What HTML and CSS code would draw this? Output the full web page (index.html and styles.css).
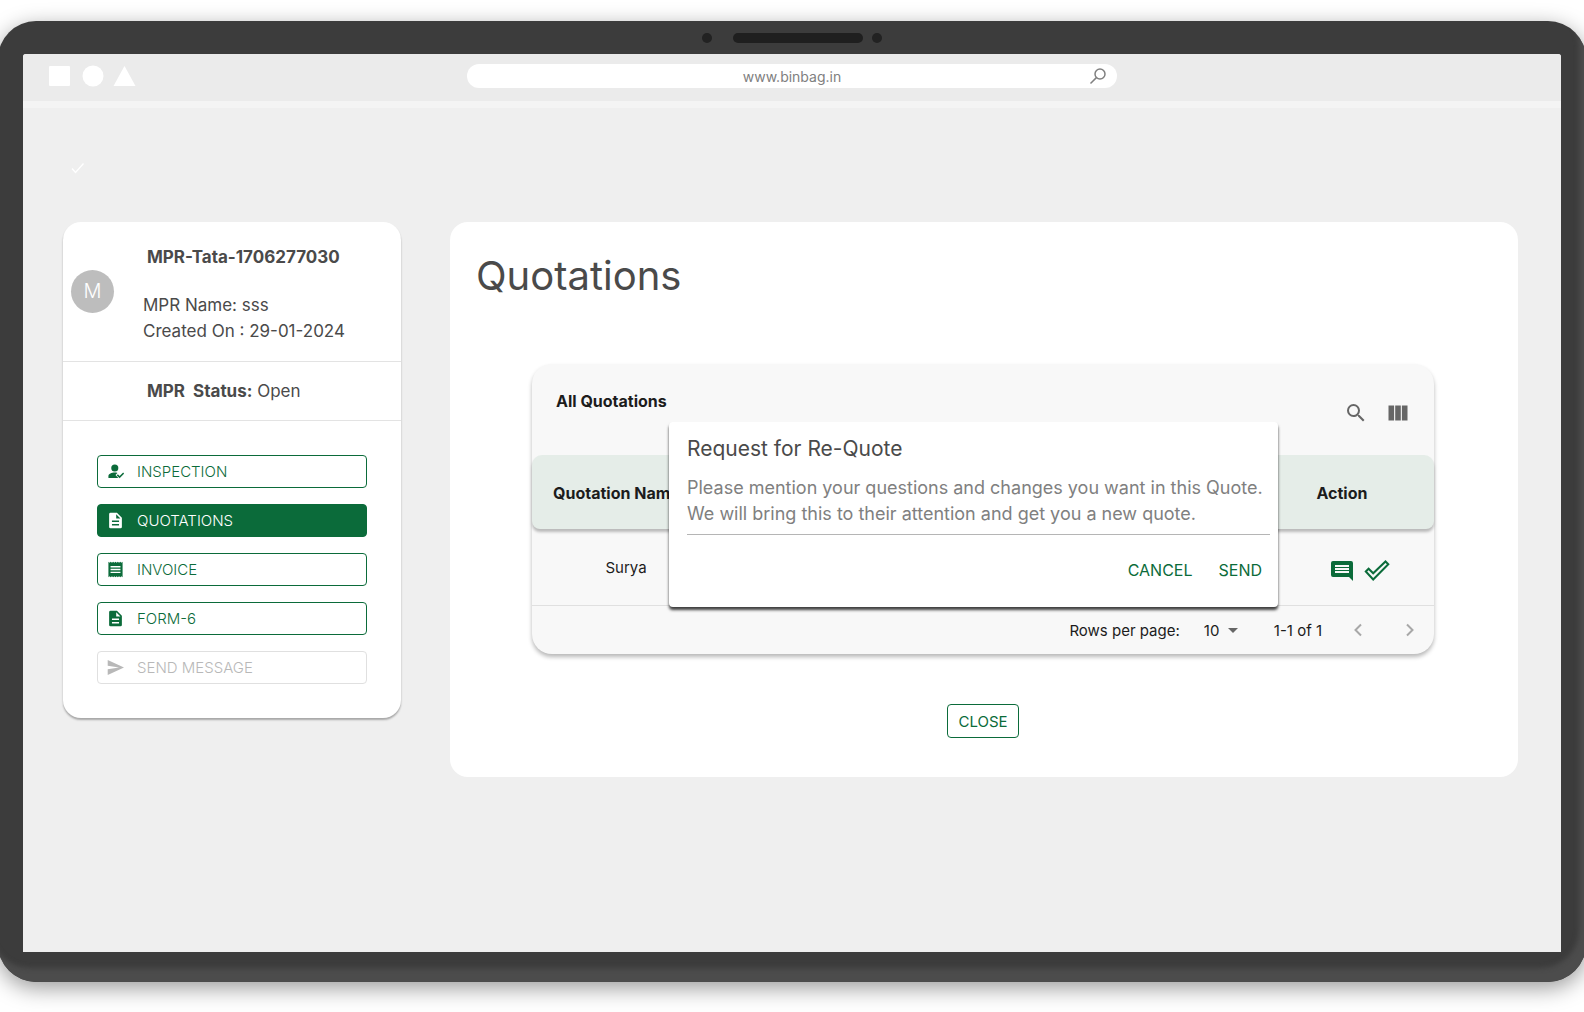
FILE: index.html
```html
<!DOCTYPE html>
<html lang="en">
<head>
    <meta charset="UTF-8">
    <meta name="viewport" content="width=device-width, initial-scale=1.0">
    <title>Quotations</title>
    <link rel="stylesheet" href="styles.css">
</head>
<body>
    <div class="device">
        <div class="camera-bar">
            <span class="camera-dot"></span>
            <span class="speaker"></span>
            <span class="camera-dot"></span>
        </div>

        <div class="screen">
            <header class="browser-bar">
                <svg class="window-shapes" width="88" height="22" viewBox="0 0 88 22" fill="#fff">
                    <rect x="1" y="1" width="21" height="20" rx="1"/>
                    <circle cx="45" cy="11" r="10.5"/>
                    <path d="M76.500 1L87.500 21H65.500z"/>
                </svg>
                <form class="address">
                    <input type="text" value="www.binbag.in" aria-label="Address">
                    <svg width="18" height="18" viewBox="0 0 18 18" fill="none" stroke="#808080" stroke-width="1.500">
                        <circle cx="11" cy="7" r="5"/>
                        <path d="M7.400 10.600L1.500 16.500"/>
                    </svg>
                </form>
            </header>

            <div class="notice">
                <svg width="14" height="12" viewBox="0 0 14 12" fill="none" stroke="#fff" stroke-width="1.300">
                    <path d="M1 6.500L4.500 10.500L12.500 1.500"/>
                </svg>
            </div>

            <div class="content">
                <aside class="card">
                    <div class="card-head">
                        <div class="avatar">M</div>
                        <div>
                            <h2>MPR-Tata-1706277030</h2>
                            <p>MPR Name: sss<br>Created On : 29-01-2024</p>
                        </div>
                    </div>
                    <p class="status"><strong>MPR&nbsp; Status:</strong> Open</p>
                    <nav class="menu">
                        <button type="button">
                            <svg viewBox="0 0 24 24"><circle cx="11" cy="7" r="5"/><path d="M2 21v-2.500c0-3 4.500-5 9-5 1.500 0 2.500.2 3.700.5L12 16.800 16 21zM17.800 21.500l-4-4 1.500-1.500 2.500 2.500 5-5 1.500 1.500z"/></svg>
                            Inspection
                        </button>
                        <button type="button" class="active">
                            <svg viewBox="0 0 24 24"><path d="M14 1H5a2 2 0 0 0-2 2v18a2 2 0 0 0 2 2h14a2 2 0 0 0 2-2V8zm3 18H7v-2h10zm0-5H7v-2h10zm-4-5V3l6 6z"/></svg>
                            Quotations
                        </button>
                        <button type="button">
                            <svg viewBox="0 0 24 24"><path d="M19 17H5v-2h14zm0-4H5v-2h14zm0-4H5V7h14zM2 23l1.700-1.500L5.300 23 7 21.500 8.700 23l1.600-1.500L12 23l1.700-1.500 1.600 1.500 1.700-1.500 1.700 1.500 1.600-1.500L22 23V1l-1.700 1.500L18.700 1 17 2.500 15.300 1l-1.600 1.500L12 1l-1.700 1.500L8.700 1 7 2.500 5.300 1 3.700 2.500 2 1z"/></svg>
                            Invoice
                        </button>
                        <button type="button">
                            <svg viewBox="0 0 24 24"><path d="M14 1H5a2 2 0 0 0-2 2v18a2 2 0 0 0 2 2h14a2 2 0 0 0 2-2V8zm3 18H7v-2h10zm0-5H7v-2h10zm-4-5V3l6 6z"/></svg>
                            Form-6
                        </button>
                        <button type="button" disabled>
                            <svg viewBox="0 0 24 24"><path d="M1 22.500L24 12 1 1.500v8L17 12 1 14.500z"/></svg>
                            Send Message
                        </button>
                    </nav>
                </aside>

                <main class="panel">
                    <h1>Quotations</h1>

                    <section class="quotes">
                        <div class="toolbar">
                            <h3>All Quotations</h3>
                            <button type="button" aria-label="Search">
                                <svg viewBox="0 0 24 24"><path d="M15.500 14h-.79l-.28-.27A6.471 6.471 0 0 0 16 9.500 6.500 6.500 0 1 0 9.500 16c1.610 0 3.090-.59 4.230-1.570l.27.28v.79l5 4.990L20.490 19l-4.990-5zm-6 0C7.010 14 5 11.990 5 9.500S7.010 5 9.500 5 14 7.010 14 9.500 11.990 14 9.500 14z"/></svg>
                            </button>
                            <button type="button" aria-label="View columns">
                                <svg viewBox="0 0 24 24"><path d="M2.500 4.500h5.600v15H2.500zM9.200 4.500h5.600v15H9.200zM15.900 4.500h5.600v15h-5.600z"/></svg>
                            </button>
                        </div>

                        <table>
                            <thead>
                                <tr><th>Quotation Name</th><th></th><th class="action">Action</th></tr>
                            </thead>
                            <tbody>
                                <tr>
                                    <td>Surya</td>
                                    <td></td>
                                    <td class="row-actions">
                                        <button type="button" aria-label="Request re-quote">
                                            <svg width="24" height="24" viewBox="0 0 24 24" fill="#0b6b3a"><path d="M22.990 4a2 2 0 0 0-1.990-2H3a2 2 0 0 0-2 2v12a2 2 0 0 0 2 2h16l4 4zM19 14H5v-2h14zm0-3H5V9h14zm0-3H5V6h14z"/></svg>
                                        </button>
                                        <button type="button" aria-label="Accept">
                                            <svg width="26" height="22" viewBox="0 0 26 22" fill="none" stroke="#0b6b3a" stroke-width="2"><path d="M1.800 11.500L4.600 8.700L9.200 13.300L21.500 1.500L24.300 4.300L9.200 19.500z"/></svg>
                                        </button>
                                    </td>
                                </tr>
                            </tbody>
                        </table>

                        <div class="pager">
                            <label for="rows">Rows per page:</label>
                            <span class="select">
                                <select id="rows">
                                    <option>10</option>
                                    <option>25</option>
                                </select>
                                <svg width="10" height="5" viewBox="0 0 10 5" fill="#666"><path d="M0 0h10L5 5z"/></svg>
                            </span>
                            <span class="range">1-1 of 1</span>
                            <button type="button" aria-label="Previous page" disabled>
                                <svg width="8" height="14" viewBox="0 0 8 14"><path d="M7 1.500L1.500 7 7 12.500"/></svg>
                            </button>
                            <button type="button" aria-label="Next page" disabled>
                                <svg width="8" height="14" viewBox="0 0 8 14"><path d="M1 1.500L6.500 7 1 12.500"/></svg>
                            </button>
                        </div>

                        <form class="dialog" role="dialog" aria-labelledby="dialog-title">
                            <h4 id="dialog-title">Request for Re-Quote</h4>
                            <textarea rows="2" aria-labelledby="dialog-title" placeholder="Please mention your questions and changes you want in this Quote.&#10;We will bring this to their attention and get you a new quote."></textarea>
                            <div class="dialog-actions">
                                <button type="button">Cancel</button>
                                <button type="button">Send</button>
                            </div>
                        </form>
                    </section>

                    <button type="button" class="close">Close</button>
                </main>
            </div>
        </div>
    </div>
</body>
</html>
```

FILE: styles.css
```css
:root {
    --green: #0b6b3a;
    --text: #4a4a4a;
    --bezel: #3c3c3c;
}

* {
    box-sizing: border-box;
}

body {
    margin: 0;
    padding: 21px 0 30px;
    min-height: 100vh;
    display: flex;
    overflow-x: hidden;
    background: #fff;
    color: var(--text);
    font-family: Inter, "Open Sans", sans-serif;
    font-size: 17px;
}

h1, h2, h3, h4, p {
    margin: 0;
}

button, input, select, textarea {
    font-family: inherit;
    font-size: 15px;
    color: inherit;
}

button {
    padding: 0;
    border: none;
    background: none;
    cursor: pointer;
}

/* Laptop frame */
.device {
    flex: 1;
    display: flex;
    flex-direction: column;
    margin: 0 -2px;
    padding: 0 25px 30px;
    background: var(--bezel);
    border-radius: 38px;
    box-shadow: inset -7px -14px 5px #4c4c4c, 0 6px 22px rgba(0, 0, 0, 0.4);
}

.camera-bar {
    display: flex;
    justify-content: center;
    align-items: center;
    gap: 9px;
    height: 33px;
}

.camera-dot {
    width: 10px;
    height: 10px;
    border-radius: 50%;
    background: #222;
}

.camera-dot:first-child {
    margin-right: 12px;
}

.speaker {
    width: 130px;
    height: 10px;
    border-radius: 5px;
    background: #1f1f1f;
}

.screen {
    flex: 1;
    background: #efefef;
    border-radius: 3px 3px 0 0;
}

.browser-bar {
    display: grid;
    grid-template-columns: 1fr minmax(0, 650px) 1fr;
    align-items: center;
    height: 54px;
    padding: 0 25px 3px;
    background: #ebebeb;
    border-bottom: 7px solid #f4f4f4;
    border-radius: 3px 3px 0 0;
}

.address {
    display: flex;
    align-items: center;
    height: 24px;
    padding: 0 10px;
    background: #fff;
    border-radius: 12px;
}

.address input {
    flex: 1;
    min-width: 0;
    padding: 0 0 0 18px;
    border: none;
    background: none;
    color: #808080;
    font-size: 14px;
    text-align: center;
}

.notice {
    height: 114px;
    padding: 50px 0 0 48px;
}

.content {
    display: grid;
    grid-template-columns: 338px 1fr;
    align-items: start;
    gap: 49px;
    padding: 0 43px 40px 40px;
}

/* Left card */
.card {
    background: #fff;
    border-radius: 18px;
    box-shadow: 0 2px 2px rgba(0, 0, 0, 0.3);
}

.card-head {
    display: flex;
    gap: 29px;
    height: 140px;
    padding: 22px 8px 0;
    border-bottom: 1px solid #e3e3e3;
}

.avatar {
    width: 43px;
    height: 43px;
    margin-top: 26px;
    border-radius: 50%;
    background: #bdbdbd;
    color: #fff;
    font-size: 20px;
    font-weight: 300;
    line-height: 43px;
    text-align: center;
}

.card h2 {
    padding-left: 4px;
    font-size: 17px;
    line-height: 26px;
}

.card-head p {
    margin-top: 22px;
    line-height: 26px;
}

.status {
    padding: 16px 8px 16px 84px;
    border-bottom: 1px solid #e3e3e3;
    line-height: 26px;
}

.menu {
    display: flex;
    flex-direction: column;
    gap: 16px;
    padding: 34px;
}

.menu button {
    display: flex;
    align-items: center;
    gap: 13px;
    height: 33px;
    padding: 0 9px;
    border: 1px solid var(--green);
    border-radius: 4px;
    color: var(--green);
    font-weight: 300;
    text-transform: uppercase;
}

.menu svg {
    width: 17px;
    height: 17px;
    fill: currentColor;
}

.menu .active {
    background: var(--green);
    color: #fff;
}

.menu button:disabled {
    border-color: #e0e0e0;
    color: #b8b8b8;
}

/* Main panel */
.panel {
    display: flex;
    flex-direction: column;
    padding: 30px 84px 39px 82px;
    background: #fff;
    border-radius: 18px;
}

.panel h1 {
    margin: 0 0 64px -56px;
    font-size: 40px;
    font-weight: 400;
    line-height: 48px;
}

.quotes {
    position: relative;
    background: #f8f8f8;
    border-radius: 20px;
    box-shadow: 0 3px 4px rgba(0, 0, 0, 0.28);
    color: #1c1c1c;
    font-size: 15px;
}

.toolbar {
    display: flex;
    align-items: flex-start;
    gap: 18px;
    height: 91px;
    padding: 24px 24px 0;
}

.toolbar h3 {
    flex: 1;
    font-size: 16px;
    line-height: 26px;
}

.toolbar svg {
    width: 24px;
    height: 24px;
    margin-top: 13px;
    fill: #666;
}

.quotes table {
    width: 100%;
    table-layout: fixed;
    border-spacing: 0;
}

.quotes th {
    height: 74px;
    padding: 2px 0 0 21px;
    background: #e5ede8;
    box-shadow: 0 3px 3px rgba(0, 0, 0, 0.25);
    font-size: 16px;
    text-align: left;
}

.quotes th:first-child {
    width: 188px;
    border-radius: 10px 0 0 8px;
}

.quotes th:last-child {
    width: 184px;
    border-radius: 0 10px 8px 0;
}

.quotes th.action {
    padding-left: 0;
    text-align: center;
}

.quotes td {
    height: 77px;
    padding: 0;
    border-bottom: 1px solid #e0e0e0;
    text-align: center;
}

.quotes .row-actions {
    padding-top: 8px;
    padding-left: 36px;
}

.row-actions button {
    margin: 0 3px;
    vertical-align: middle;
}

.row-actions svg {
    display: block;
}

.pager {
    display: flex;
    align-items: center;
    justify-content: flex-end;
    height: 48px;
    padding-right: 20px;
}

.select {
    display: flex;
    align-items: center;
    margin: 0 36px 0 24px;
}

.select select {
    width: 24px;
    padding: 0;
    border: none;
    background: none;
    appearance: none;
}

.range {
    margin-right: 32px;
}

.pager button + button {
    margin-left: 44px;
}

.pager button svg {
    display: block;
    fill: none;
    stroke: #a8a8a8;
    stroke-width: 2;
}

/* Re-quote dialog */
.dialog {
    position: absolute;
    top: 58px;
    left: 137px;
    right: 156px;
    padding: 14px 0 24px 18px;
    background: #fff;
    border-radius: 4px;
    box-shadow: 0 3px 3px rgba(0, 0, 0, 0.75);
    color: var(--text);
}

.dialog h4 {
    font-size: 21px;
    font-weight: 400;
    line-height: 26px;
}

.dialog textarea {
    display: block;
    width: calc(100% - 8px);
    height: 60px;
    margin-top: 13px;
    padding: 0;
    border: none;
    border-bottom: 1px solid #b5b5b5;
    background: none;
    font-size: 18px;
    line-height: 26px;
    resize: none;
    overflow: hidden;
    white-space: pre;
}

.dialog textarea::placeholder {
    color: #808080;
    opacity: 1;
}

.dialog-actions {
    display: flex;
    justify-content: flex-end;
    gap: 26px;
    margin-top: 22px;
    padding-right: 16px;
}

.dialog-actions button {
    color: var(--green);
    font-size: 16px;
    line-height: 26px;
    text-transform: uppercase;
}

.close {
    align-self: center;
    height: 34px;
    margin-top: 50px;
    padding: 0 10px;
    border: 1px solid var(--green);
    border-radius: 4px;
    color: var(--green);
    text-transform: uppercase;
}

@media (max-width: 1100px) {
    .content {
        grid-template-columns: 1fr;
    }
}
```
